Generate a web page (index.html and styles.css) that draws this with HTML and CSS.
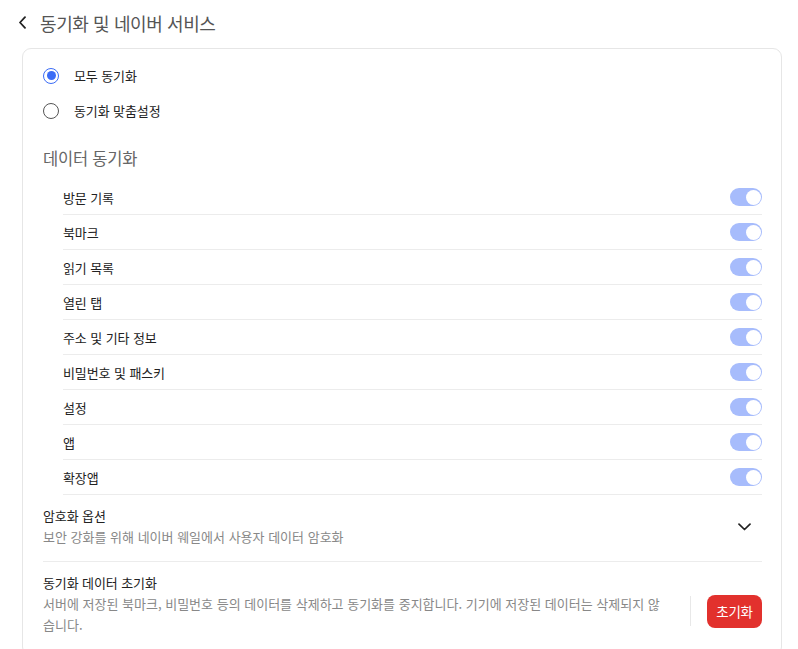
FILE: index.html
```html
<!DOCTYPE html>
<html lang="ko">
<head>
<meta charset="utf-8">
<link rel="stylesheet" href="styles.css">
</head>
<body>
<header class="topbar">
  <svg class="back" width="9" height="13" viewBox="0 0 9 13"><path d="M7 1.2 L2 6.5 L7 11.8" fill="none" stroke="#222" stroke-width="1.8" stroke-linecap="round" stroke-linejoin="round"/></svg>
  <h1 class="title">동기화 및 네이버 서비스</h1>
</header>
<main class="card">
  <div class="radio-row"><span class="radio checked"></span><span class="radio-label">모두 동기화</span></div>
  <div class="radio-row"><span class="radio"></span><span class="radio-label">동기화 맞춤설정</span></div>
  <h2 class="section-heading">데이터 동기화</h2>
  <ul class="sync-list">
    <li class="sync-row"><span>방문 기록</span><span class="toggle"></span></li>
    <li class="sync-row"><span>북마크</span><span class="toggle"></span></li>
    <li class="sync-row"><span>읽기 목록</span><span class="toggle"></span></li>
    <li class="sync-row"><span>열린 탭</span><span class="toggle"></span></li>
    <li class="sync-row"><span>주소 및 기타 정보</span><span class="toggle"></span></li>
    <li class="sync-row"><span>비밀번호 및 패스키</span><span class="toggle"></span></li>
    <li class="sync-row"><span>설정</span><span class="toggle"></span></li>
    <li class="sync-row"><span>앱</span><span class="toggle"></span></li>
    <li class="sync-row"><span>확장앱</span><span class="toggle"></span></li>
  </ul>
  <div class="option-row">
    <div class="option-text">
      <div class="option-title">암호화 옵션</div>
      <div class="option-desc">보안 강화를 위해 네이버 웨일에서 사용자 데이터 암호화</div>
    </div>
    <svg class="chev" width="13" height="8" viewBox="0 0 13 8"><path d="M1 1.2 L6.5 6.5 L12 1.2" fill="none" stroke="#222" stroke-width="1.7" stroke-linecap="round" stroke-linejoin="round"/></svg>
  </div>
  <div class="reset-row">
    <div class="option-text reset-text">
      <div class="option-title">동기화 데이터 초기화</div>
      <div class="option-desc">서버에 저장된 북마크, 비밀번호 등의 데이터를 삭제하고 동기화를 중지합니다. 기기에 저장된 데이터는 삭제되지 않습니다.</div>
    </div>
    <div class="vdivider"></div>
    <button class="reset-btn">초기화</button>
  </div>
</main>
</body>
</html>
```

FILE: styles.css
```css
* { box-sizing: border-box; }
html, body { margin: 0; padding: 0; background: #fff; }
body {
  font-family: "Noto Sans CJK KR", "Noto Sans", sans-serif;
  color: #222;
  font-size: 13px;
  overflow: hidden;
}
.topbar {
  height: 45px;
  display: flex;
  align-items: center;
  padding-left: 18px;
  gap: 13px;
}
.back { display: block; }
.title {
  margin: 0;
  font-size: 18px;
  font-weight: 400;
  color: #555;
  letter-spacing: -0.4px;
}
.card {
  margin: 3px 0 0 22px;
  width: 760px;
  border: 1px solid #e6e6e6;
  border-radius: 9px;
  padding: 9px 19px 20px 20px;
}
.radio-row {
  height: 35px;
  display: flex;
  align-items: center;
  gap: 15px;
}
.radio {
  width: 16px;
  height: 16px;
  border-radius: 50%;
  border: 1.5px solid #555;
  display: flex;
  align-items: center;
  justify-content: center;
  flex: none;
}
.radio.checked { border-color: #3b6cf6; }
.radio.checked::after {
  content: "";
  width: 9px;
  height: 9px;
  border-radius: 50%;
  background: #3b6cf6;
}
.radio-label { letter-spacing: -0.1px; }
.section-heading {
  margin: 18px 0 10px 0;
  font-size: 16.5px;
  font-weight: 400;
  color: #666;
  line-height: 24px;
  letter-spacing: -0.2px;
}
.sync-list {
  list-style: none;
  margin: 0;
  padding: 0 0 0 20px;
}
.sync-row {
  height: 35px;
  border-bottom: 1px solid #ececec;
  display: flex;
  align-items: center;
  justify-content: space-between;
  letter-spacing: -0.1px;
}
.toggle {
  width: 32px;
  height: 18px;
  border-radius: 9px;
  background: #a7bcfc;
  position: relative;
  flex: none;
}
.toggle::after {
  content: "";
  position: absolute;
  right: 1.5px;
  top: 1.5px;
  width: 15px;
  height: 15px;
  border-radius: 50%;
  background: #fff;
}
.option-row {
  display: flex;
  align-items: center;
  justify-content: space-between;
  padding: 11px 11px 14px 0;
  border-bottom: 1px solid #ececec;
}
.option-title { line-height: 20px; letter-spacing: -0.1px; color: #222; }
.option-desc { line-height: 21px; color: #888; letter-spacing: 0; }
.chev { display: block; }
.reset-row {
  display: flex;
  align-items: center;
  padding: 11px 0 0 0;
}
.reset-text { flex: 1; padding-right: 22px; }
.vdivider {
  width: 1px;
  height: 30px;
  background: #e8e8e8;
  margin-top: 14px;
  flex: none;
}
.reset-btn {
  margin-left: 16px;
  margin-top: 14px;
  height: 33px;
  width: 55px;
  border: none;
  border-radius: 8px;
  background: #e2312d;
  color: #fff;
  font-family: inherit;
  font-size: 13.5px;
  letter-spacing: -0.2px;
  flex: none;
  padding: 0;
}
```
